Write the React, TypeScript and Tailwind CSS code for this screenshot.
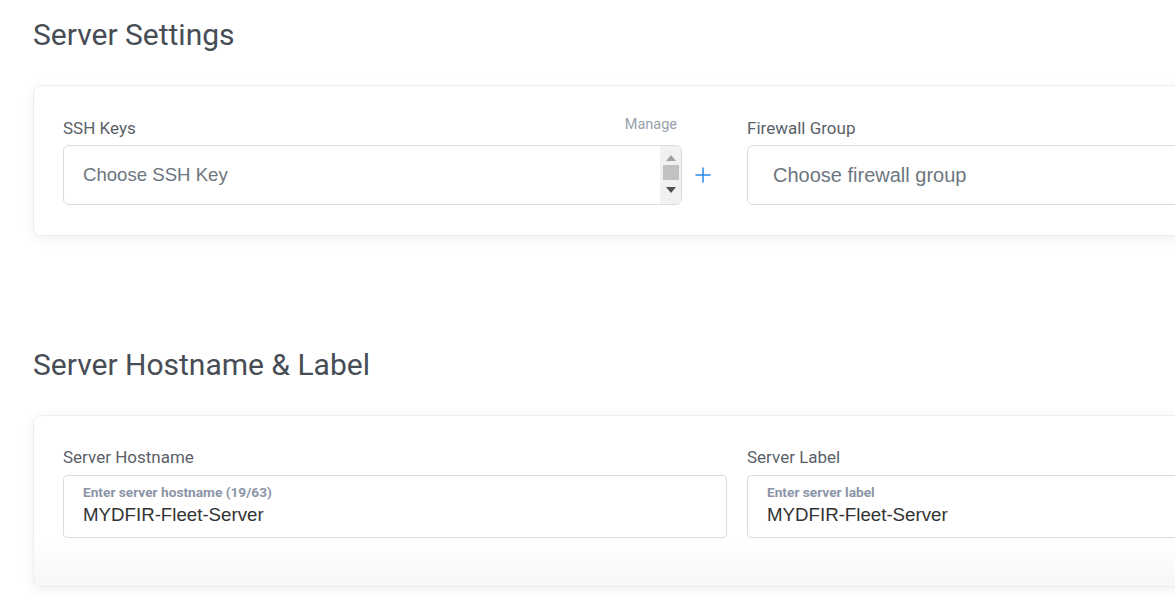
import React from "react";

const font = { fontFamily: "Roboto, 'Liberation Sans', sans-serif" };
const arial = { fontFamily: "'Liberation Sans', Arial, sans-serif" };

function Card({ children, className = "" }: { children: React.ReactNode; className?: string }) {
  return (
    <div
      className={`w-[1408px] rounded-[8px] border border-[#ededed] shadow-[0_3px_14px_rgba(0,0,0,0.06)] px-[29px] grid grid-cols-2 gap-x-[20px] ${className}`}
    >
      {children}
    </div>
  );
}

export default function App() {
  return (
    <div className="w-[1175px] h-[596px] overflow-hidden bg-white" style={font}>
      <div className="pl-[33px]">
        <h1 className="pt-[18px] text-[30px] leading-[34px] text-[#474d55] font-normal">Server Settings</h1>

        <Card className="mt-[33px] bg-white pt-[29px] pb-[30px]">
          <div>
            <div className="flex items-end justify-between h-[26px] w-[619px] pr-[5px]">
              <span className="text-[17px] leading-[20px] text-[#5b6168] mb-[3px]">SSH Keys</span>
              <span className="text-[14.5px] leading-[16px] text-[#97a0ab] mb-[8px]">Manage</span>
            </div>
            <div className="flex items-center mt-[4px]">
              <div className="w-[619px] h-[60px] rounded-[6px] border border-[#dcdcdc] flex overflow-hidden">
                <div className="flex-1 flex items-center pl-[19px] text-[18.6px] text-[#6c7680]" style={arial}>
                  Choose SSH Key
                </div>
                <div className="w-[21px] h-full bg-[#f1f1f1] flex flex-col items-center">
                  <svg width="10" height="6" viewBox="0 0 10 6" className="mt-[9px]">
                    <polygon points="5,0 10,6 0,6" fill="#a3a3a3" />
                  </svg>
                  <div className="w-[16px] h-[15px] bg-[#c1c1c1] mt-[4px]" />
                  <svg width="10" height="6" viewBox="0 0 10 6" className="mt-[7px]">
                    <polygon points="0,0 10,0 5,6" fill="#505050" />
                  </svg>
                </div>
              </div>
              <svg width="16" height="16" viewBox="0 0 16 16" className="ml-[13px]">
                <path d="M8 0.5V15.5M0.5 8H15.5" stroke="#2c86ea" strokeWidth="1.5" />
              </svg>
            </div>
          </div>
          <div>
            <div className="flex items-end h-[26px]">
              <span className="text-[17px] leading-[20px] text-[#5b6168] mb-[3px]">Firewall Group</span>
            </div>
            <div className="mt-[4px] h-[60px] rounded-[6px] border border-[#dcdcdc] flex items-center pl-[25px] text-[20px] text-[#6c7680]" style={arial}>
              Choose firewall group
            </div>
          </div>
        </Card>

        <h2 className="mt-[112px] text-[30px] leading-[34px] text-[#474d55] font-normal">Server Hostname &amp; Label</h2>

        <Card className="mt-[33px] bg-gradient-to-b from-white from-[72%] to-[#f7f7f7] pt-[31px] pb-[48px]">
          <div>
            <div className="text-[17px] leading-[20px] text-[#5b6168]">Server Hostname</div>
            <div className="mt-[8px] h-[63px] rounded-[4px] border border-[#dcdcdc] bg-white pl-[19px] pt-[8px]">
              <div className="text-[13.7px] leading-[16px] font-bold text-[#8b95a8]">Enter server hostname (19/63)</div>
              <div className="text-[18.7px] leading-[22px] text-[#333] mt-[4px]" style={arial}>MYDFIR-Fleet-Server</div>
            </div>
          </div>
          <div>
            <div className="text-[17px] leading-[20px] text-[#5b6168]">Server Label</div>
            <div className="mt-[8px] h-[63px] rounded-[4px] border border-[#dcdcdc] bg-white pl-[19px] pt-[8px]">
              <div className="text-[13.7px] leading-[16px] font-bold text-[#8b95a8]">Enter server label</div>
              <div className="text-[18.7px] leading-[22px] text-[#333] mt-[4px]" style={arial}>MYDFIR-Fleet-Server</div>
            </div>
          </div>
        </Card>
      </div>
    </div>
  );
}
